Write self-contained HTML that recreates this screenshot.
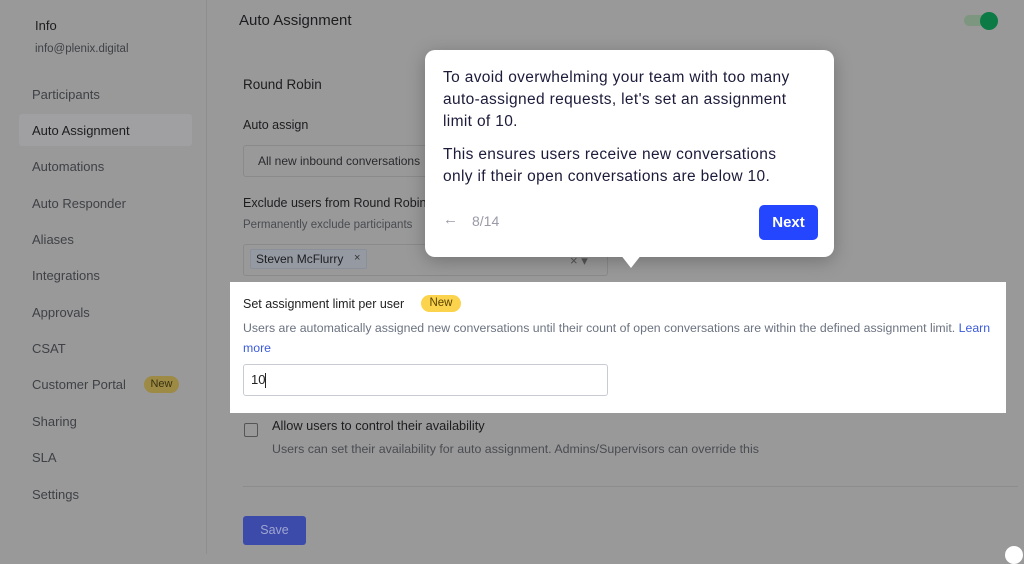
<!DOCTYPE html>
<html style="background:#999"><head><meta charset="utf-8"><style>
*{margin:0;padding:0;box-sizing:border-box}
body{width:1024px;height:554px;overflow:hidden;background:#999;font-family:"Liberation Sans",sans-serif;position:relative;color:#1e1e22}
.a{position:absolute;white-space:nowrap}
.nav{left:32px;font-size:13px;color:#3f4146}
</style></head><body>
<div class="a" style="left:206px;top:0;width:1px;height:554px;background:#8e8e8e"></div>
<div class="a" style="left:35px;top:18px;font-size:13px;color:#1d1d20">Info</div>
<div class="a" style="left:35px;top:43px;font-size:11.5px;color:#3f4146">info@plenix.digital</div>
<div class="a" style="left:19px;top:114px;width:173px;height:32px;background:#a0a0a3;border-radius:3px"></div>
<div class="a nav" style="top:87px">Participants</div>
<div class="a nav" style="top:123px;color:#1d1d20">Auto Assignment</div>
<div class="a nav" style="top:159px">Automations</div>
<div class="a nav" style="top:196px">Auto Responder</div>
<div class="a nav" style="top:232px">Aliases</div>
<div class="a nav" style="top:268px">Integrations</div>
<div class="a nav" style="top:305px">Approvals</div>
<div class="a nav" style="top:341px">CSAT</div>
<div class="a nav" style="top:377px">Customer Portal</div>
<div class="a" style="left:144px;top:376px;width:35px;height:17px;border-radius:9px;background:#9c8a45;font-size:11px;color:#3a3210;text-align:center;line-height:17px">New</div>
<div class="a nav" style="top:414px">Sharing</div>
<div class="a nav" style="top:450px">SLA</div>
<div class="a nav" style="top:487px">Settings</div>

<div class="a" style="left:239px;top:12px;font-size:15px;color:#1d1d20">Auto Assignment</div>
<div class="a" style="left:964px;top:15px;width:26px;height:11px;border-radius:6px;background:#7d967f"></div>
<div class="a" style="left:980px;top:12px;width:18px;height:18px;border-radius:50%;background:#0b7a45"></div>
<div class="a" style="left:243px;top:77px;font-size:13.5px;color:#1d1d20">Round Robin</div>
<div class="a" style="left:243px;top:118px;font-size:12.5px;color:#1d1d20">Auto assign</div>
<div class="a" style="left:243px;top:145px;width:420px;height:32px;border:1px solid #8a8a8a;border-radius:3px"></div>
<div class="a" style="left:258px;top:154px;font-size:12px;color:#2a2a2e">All new inbound conversations</div>
<div class="a" style="left:243px;top:196px;font-size:12.5px;color:#1d1d20">Exclude users from Round Robin</div>
<div class="a" style="left:243px;top:219px;font-size:11.5px;color:#4a4c52">Permanently exclude participants</div>
<div class="a" style="left:243px;top:244px;width:365px;height:32px;border:1px solid #8a8a8a;border-radius:3px"></div>
<div class="a" style="left:250px;top:249px;width:117px;height:20px;background:#959aa2;border:1px solid #8a909a;border-radius:2px"></div>
<div class="a" style="left:256px;top:252px;font-size:12px;color:#1d1d20">Steven McFlurry</div>
<div class="a" style="left:354px;top:252px;font-size:11px;color:#333">×</div>
<div class="a" style="left:570px;top:253px;font-size:13px;color:#555">× ▾</div>

<div class="a" style="left:230px;top:282px;width:776px;height:131px;background:#fff"></div>
<div class="a" style="left:243px;top:297px;font-size:12.5px;color:#222">Set assignment limit per user</div>
<div class="a" style="left:421px;top:295px;width:40px;height:17px;border-radius:9px;background:#fcd34d;font-size:11.5px;color:#5a4500;text-align:center;line-height:17px">New</div>
<div class="a" style="left:243px;top:321px;font-size:12.3px;color:#6b7280">Users are automatically assigned new conversations until their count of open conversations are within the defined assignment limit. <span style="color:#3b5bdb">Learn</span></div>
<div class="a" style="left:243px;top:341px;font-size:12.3px;color:#3b5bdb">more</div>
<div class="a" style="left:243px;top:364px;width:365px;height:32px;border:1px solid #c8ccd2;border-radius:3px;background:#fff"></div>
<div class="a" style="left:251px;top:372px;font-size:13px;color:#222">10<span style="display:inline-block;width:1px;height:15px;background:#222;vertical-align:middle"></span></div>

<div class="a" style="left:244px;top:423px;width:14px;height:14px;border:1.5px solid #555;border-radius:2px"></div>
<div class="a" style="left:272px;top:418px;font-size:12.8px;color:#1d1d20">Allow users to control their availability</div>
<div class="a" style="left:272px;top:442px;font-size:12.4px;color:#4a4c52">Users can set their availability for auto assignment. Admins/Supervisors can override this</div>
<div class="a" style="left:243px;top:486px;width:775px;height:1px;background:#8c8c8c"></div>
<div class="a" style="left:243px;top:516px;width:63px;height:29px;border-radius:3px;background:#3c4baa;color:#a0a6d0;font-size:12.5px;text-align:center;line-height:29px">Save</div>
<div class="a" style="left:1005px;top:546px;width:18px;height:18px;border-radius:50%;background:#fff"></div>

<div class="a" style="left:425px;top:50px;width:409px;height:207px;background:#fff;border-radius:10px;box-shadow:0 4px 18px rgba(0,0,0,.25)"></div>
<div class="a" style="left:620px;top:254px;width:0;height:0;border-left:11px solid transparent;border-right:11px solid transparent;border-top:14px solid #fff"></div>
<div class="a" style="left:443px;top:67px;font-size:15.5px;letter-spacing:.35px;line-height:22px;color:#1c1b3a">To avoid overwhelming your team with too many<br>auto-assigned requests, let's set an assignment<br>limit of 10.</div>
<div class="a" style="left:443px;top:144px;font-size:15.5px;letter-spacing:.35px;line-height:22px;color:#1c1b3a">This ensures users receive new conversations<br>only if their open conversations are below 10.</div>
<div class="a" style="left:443px;top:211px;font-size:15px;color:#9a9aa8">←</div>
<div class="a" style="left:472px;top:213px;font-size:14px;color:#9a9aa8">8/14</div>
<div class="a" style="left:759px;top:205px;width:59px;height:35px;border-radius:5px;background:#2446ff;color:#fff;font-size:15px;font-weight:bold;text-align:center;line-height:35px">Next</div>
</body></html>
